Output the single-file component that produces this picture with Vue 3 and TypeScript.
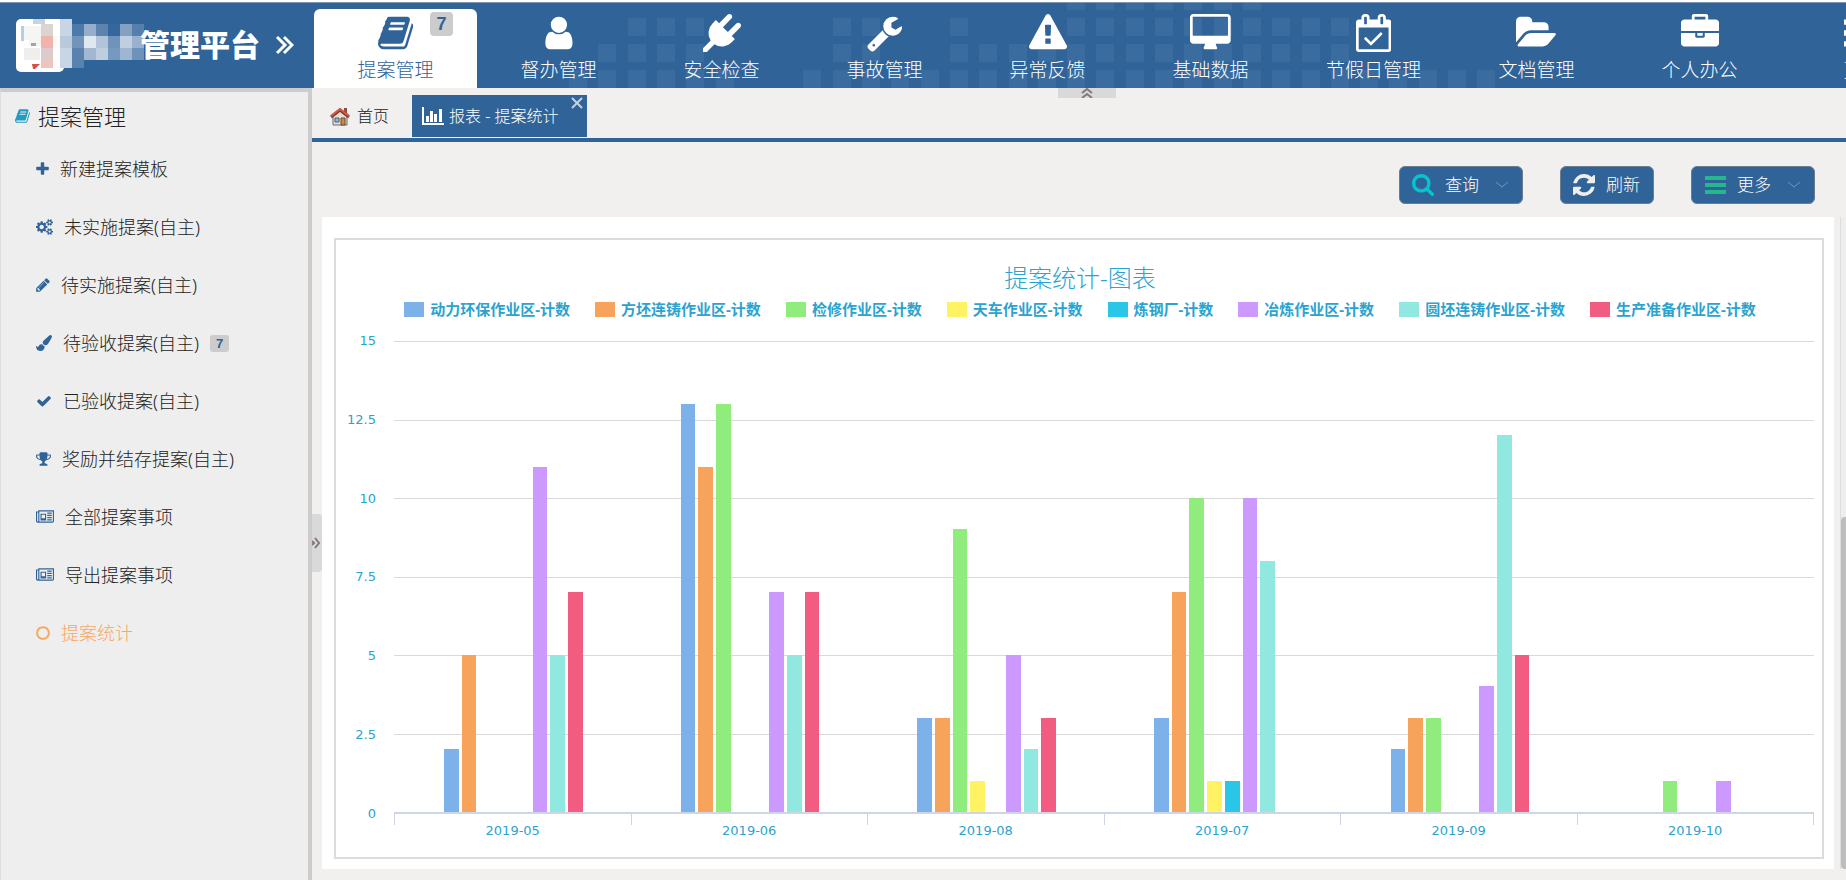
<script setup lang="ts">
interface Glyph { box: string; d: string }
interface NavItem { label: string; icon: string; active?: boolean; badge?: number }
interface MenuItem { label: string; icon: string; width: number; active?: boolean; badge?: number }
interface Series { name: string; color: string; values: number[] }

const glyphs: Record<string, Glyph> = {
  book: { box: '64 0 1664 1792', d: 'M1703 478q40 57 18 129l-275 906q-19 64-76.5 107.5t-122.5 43.5h-923q-77 0-148.5-53.5t-99.5-131.5q-24-67-2-127 0-4 3-27t4-37q1-8-3-21.5t-3-19.5q2-11 8-21t16.5-23.5 16.5-23.5q23-38 45-91.5t30-91.5q3-10 .5-30t-.5-28q3-11 17-28t17-23q21-36 42-92t25-90q1-9-2.5-32t.5-28q4-13 22-30.5t22-22.5q19-26 42.5-84.5t27.5-96.5q1-8-3-25.5t-2-26.5q2-8 9-18t18-23 17-21q8-12 16.5-30.5t15-35 16-36 19.5-32 26.5-23.5 36-11.5 47.5 5.5l-1 3q38-9 51-9h761q74 0 114 56t18 130l-274 906q-36 119-71.5 153.5t-128.5 34.5h-869q-27 0-38 15-11 16-1 43 24 70 144 70h923q29 0 56-15.5t35-41.5l300-987q7-22 5-57 38 15 59 43zm-1064 2q-4 13 2 22.5t20 9.5h608q13 0 25.5-9.5t16.5-22.5l21-64q4-13-2-22.5t-20-9.5h-608q-13 0-25.5 9.5t-16.5 22.5zm-83 256q-4 13 2 22.5t20 9.5h608q13 0 25.5-9.5t16.5-22.5l21-64q4-13-2-22.5t-20-9.5h-608q-13 0-25.5 9.5t-16.5 22.5z' },
  user: { box: '192 0 1408 1792', d: 'M1536 1399q0 109-62.5 187t-150.5 78h-854q-88 0-150.5-78t-62.5-187q0-85 8.5-160.5t31.5-152 58.5-131 94-89 134.5-34.5q131 128 313 128t313-128q76 0 134.5 34.5t94 89 58.5 131 31.5 152 8.5 160.5zm-256-887q0 159-112.5 271.5t-271.5 112.5-271.5-112.5-112.5-271.5 112.5-271.5 271.5-112.5 271.5 112.5 112.5 271.5z' },
  plug: { box: '0 0 1792 1792', d: 'M1755 453q37 38 37 90.5t-37 90.5l-401 400 150 150-160 160q-163 163-389.5 186.5t-411.5-100.5l-362 362h-181v-181l362-362q-124-185-100.5-411.5t186.5-389.5l160-160 150 150 400-401q38-37 91-37t90 37 37 90.5-37 90.5l-400 401 234 234 401-400q38-37 91-37t90 37z' },
  wrench: { box: '64 0 1664 1792', d: 'M448 1472q0-26-19-45t-45-19-45 19-19 45 19 45 45 19 45-19 19-45zm644-420l-682 682q-37 37-90 37-52 0-91-37l-106-108q-38-36-38-90 0-53 38-91l681-681q39 98 114.5 173.5t173.5 114.5zm634-435q0 39-23 106-47 134-164.5 217.5t-258.5 83.5q-185 0-316.5-131.5t-131.5-316.5 131.5-316.5 316.5-131.5q58 0 121.5 16.5t107.5 46.5q16 11 16 28t-16 28l-293 169v224l193 107q5-3 79-48.5t135.5-81 70.5-35.5q15 0 23.5 10t8.5 25z' },
  warning: { box: '0 0 1792 1792', d: 'M1024 1375v-190q0-14-9.5-23.5t-22.5-9.5h-192q-13 0-22.5 9.5t-9.5 23.5v190q0 14 9.5 23.5t22.5 9.5h192q13 0 22.5-9.5t9.5-23.5zm-2-374l18-459q0-12-10-19-13-11-24-11h-220q-11 0-24 11-10 7-10 21l17 457q0 10 10 16.5t24 6.5h185q14 0 23.5-6.5t10.5-16.5zm-14-934l768 1408q35 63-2 126-17 29-46.5 46t-63.5 17h-1536q-34 0-63.5-17t-46.5-46q-37-63-2-126l768-1408q17-31 47-49t65-18 65 18 47 49z' },
  desktop: { box: '0 0 1920 1792', d: 'M1792 992v-832q0-13-9.5-22.5t-22.5-9.5h-1600q-13 0-22.5 9.5t-9.5 22.5v832q0 13 9.5 22.5t22.5 9.5h1600q13 0 22.5-9.5t9.5-22.5zm128-832v1088q0 66-47 113t-113 47h-544q0 37 16 77.5t32 71 16 43.5q0 26-19 45t-45 19h-512q-26 0-45-19t-19-45q0-14 16-44t32-70 16-78h-544q-66 0-113-47t-47-113v-1088q0-66 47-113t113-47h1600q66 0 113 47t47 113z' },
  calendar: { box: '64 0 1664 1792', d: 'M1303 964l-512 512q-10 9-23 9t-23-9l-288-288q-9-10-9-23t9-22l46-46q9-9 22-9t23 9l220 220 444-444q10-9 23-9t22 9l46 46q9 9 9 22t-9 23zm-1111 700h1408v-1024h-1408v1024zm384-1216v-288q0-14-9-23t-23-9h-64q-14 0-23 9t-9 23v288q0 14 9 23t23 9h64q14 0 23-9t9-23zm768 0v-288q0-14-9-23t-23-9h-64q-14 0-23 9t-9 23v288q0 14 9 23t23 9h64q14 0 23-9t9-23zm384-64v1280q0 52-38 90t-90 38h-1408q-52 0-90-38t-38-90v-1280q0-52 38-90t90-38h128v-96q0-66 47-113t113-47h64q66 0 113 47t47 113v96h384v-96q0-66 47-113t113-47h64q66 0 113 47t47 113v96h128q52 0 90 38t38 90z' },
  folder: { box: '0 0 1920 1792', d: 'M1879 952q0 31-31 66l-336 396q-43 51-120.5 86.5t-143.5 35.5h-1088q-34 0-60.5-13t-26.5-43q0-31 31-66l336-396q43-51 120.5-86.5t143.5-35.5h1088q34 0 60.5 13t26.5 43zm-343-344v160h-832q-94 0-197 47.5t-164 119.5l-337 396-5 6q0-4-.5-12.5t-.5-12.5v-960q0-92 66-158t158-66h320q92 0 158 66t66 158v32h544q92 0 158 66t66 158z' },
  briefcase: { box: '0 0 1792 1792', d: 'M640 256h512v-128h-512v128zm1152 640v480q0 66-47 113t-113 47h-1472q-66 0-113-47t-47-113v-480h672v160q0 26 19 45t45 19h320q26 0 45-19t19-45v-160h672zm-768 0v128h-256v-128h256zm768-480v384h-1792v-384q0-66 47-113t113-47h352v-160q0-40 28-68t68-28h576q40 0 68 28t28 68v160h352q66 0 113 47t47 113z' },
  list: { box: '0 0 1792 1792', d: 'M0 256h384v256h-384zM512 256h1280v256h-1280zM0 768h384v256h-384zM512 768h1280v256h-1280zM0 1280h384v256h-384zM512 1280h1280v256h-1280z' },
  plus: { box: '192 0 1408 1792', d: 'M1600 736v192q0 40-28 68t-68 28h-416v416q0 40-28 68t-68 28h-192q-40 0-68-28t-28-68v-416h-416q-40 0-68-28t-28-68v-192q0-40 28-68t68-28h416v-416q0-40 28-68t68-28h192q40 0 68 28t28 68v416h416q40 0 68 28t28 68z' },
  cogs: { box: '-64 0 1920 1792', d: 'M832 896q0-106-75-181t-181-75-181 75-75 181 75 181 181 75 181-75 75-181zm768 512q0-52-38-90t-90-38-90 38-38 90q0 53 37.5 90.5t90.5 37.5 90.5-37.5 37.5-90.5zm0-1024q0-52-38-90t-90-38-90 38-38 90q0 53 37.5 90.5t90.5 37.5 90.5-37.5 37.5-90.5zm-384 421v185q0 10-7 19.5t-16 10.5l-155 24q-11 35-32 76 34 48 90 115 7 11 7 20 0 12-7 19-23 30-82.5 89.5t-78.5 59.5q-11 0-21-7l-115-90q-37 19-77 31-11 108-23 155-7 24-30 24h-186q-11 0-20-7.5t-10-17.5l-23-153q-34-10-75-31l-118 89q-7 7-20 7-11 0-21-8-144-133-144-160 0-9 7-19 10-14 41-53t47-61q-23-44-35-82l-152-24q-10-1-17-9.5t-7-19.5v-185q0-10 7-19.5t16-10.5l155-24q11-35 32-76-34-48-90-115-7-11-7-20 0-12 7-20 22-30 82-89t79-59q11 0 21 7l115 90q34-18 77-32 11-108 23-154 7-24 30-24h186q11 0 20 7.5t10 17.5l23 153q34 10 75 31l118-89q8-7 20-7 11 0 21 8 144 133 144 160 0 8-7 19-12 16-42 54t-45 60q23 48 34 82l152 23q10 2 17 10.5t7 19.5zm640 533v140q0 16-149 31-12 27-30 52 51 113 51 138 0 4-4 7-122 71-124 71-8 0-46-47t-52-68q-20 2-30 2t-30-2q-14 21-52 68t-46 47q-2 0-124-71-4-3-4-7 0-25 51-138-18-25-30-52-149-15-149-31v-140q0-16 149-31 13-29 30-52-51-113-51-138 0-4 4-7 4-2 35-20t59-34 30-16q8 0 46 46.5t52 67.5q20-2 30-2t30 2q51-71 92-112l6-2q4 0 124 70 4 3 4 7 0 25-51 138 17 23 30 52 149 15 149 31zm0-1024v140q0 16-149 31-12 27-30 52 51 113 51 138 0 4-4 7-122 71-124 71-8 0-46-47t-52-68q-20 2-30 2t-30-2q-14 21-52 68t-46 47q-2 0-124-71-4-3-4-7 0-25 51-138-18-25-30-52-149-15-149-31v-140q0-16 149-31 13-29 30-52-51-113-51-138 0-4 4-7 4-2 35-20t59-34 30-16q8 0 46 46.5t52 67.5q20-2 30-2t30 2q51-71 92-112l6-2q4 0 124 70 4 3 4 7 0 25-51 138 17 23 30 52 149 15 149 31z' },
  pencil: { box: '128 0 1536 1792', d: 'M491 1536l91-91-235-235-91 91v107h128v128h107zm523-928q0-22-22-22-10 0-17 7l-542 542q-7 7-7 17 0 22 22 22 10 0 17-7l542-542q7-7 7-17zm-54-192l416 416-832 832h-416v-416zm683 96q0 53-37 90l-166 166-416-416 166-165q36-38 90-38 53 0 91 38l235 234q37 39 37 91z' },
  brush: { box: '0 0 1792 1792', d: 'M1615 0q70 0 122.5 46.5t52.5 116.5q0 63-45 151-332 629-465 752-97 91-218 91-126 0-216.5-92.5t-90.5-219.5q0-128 92-212l638-579q59-54 130-54zm-909 1034q39 76 106.5 130t150.5 76l1 71q4 213-129.5 347t-348.5 134q-123 0-218-46.5t-152.5-127.5-86.5-183-29-220q7 5 41 30t62 44.5 59 36.5 46 17q41 0 55-37 25-66 57.5-112.5t69.5-76 88-47.5 103-25.5 125-10.5z' },
  check: { box: '0 0 1792 1792', d: 'M1671 566q0 40-28 68l-724 724-136 136q-28 28-68 28t-68-28l-136-136-362-362q-28-28-28-68t28-68l136-136q28-28 68-28t68 28l294 295 656-657q28-28 68-28t68 28l136 136q28 28 28 68z' },
  trophy: { box: '64 0 1664 1792', d: 'M522 883q-74-162-74-371h-256v96q0 78 94.5 162t235.5 113zm1078-275v-96h-256q0 209-74 371 141-29 235.5-113t94.5-162zm128-128v128q0 71-41.5 143t-112 130-173 97.5-215.5 44.5q-42 54-95 95-38 34-52.5 72.5t-14.5 89.5q0 54 30.5 91t97.5 37q75 0 133.5 45.5t58.5 114.5v64q0 14-9 23t-23 9h-832q-14 0-23-9t-9-23v-64q0-69 58.5-114.5t133.5-45.5q67 0 97.5-37t30.5-91q0-51-14.5-89.5t-52.5-72.5q-53-41-95-95-113-5-215.5-44.5t-173-97.5-112-130-41.5-143v-128q0-40 28-68t68-28h288v-96q0-66 47-113t113-47h576q66 0 113 47t47 113v96h288q40 0 68 28t28 68z' },
  news: { box: '0 0 2048 1792', d: 'M1024 640h-384v384h384zM1152 1152v128h-640v-128zM1152 512v640h-640v-640zM1792 1152v128h-512v-128zM1792 896v128h-512v-128zM1792 640v128h-512v-128zM1792 384v128h-512v-128zM256 1344v-960h-128v960q0 26 19 45t45 19 45-19 19-45zM1920 1344v-1088h-1536v1088q0 33-11 64h1483q26 0 45-19t19-45zM2048 128v1216q0 80-56 136t-136 56h-1664q-80 0-136-56t-56-136v-1088h256v-128z' },
  circle: { box: '128 0 1536 1792', d: 'M896 352q-148 0-273 73t-198 198-73 273 73 273 198 198 273 73 273-73 198-198 73-273-73-273-198-198-273-73zm768 544q0 209-103 385.5t-279.500 279.500-385.500 103-385.500-103-279.500-279.500-103-385.500 103-385.500 279.500-279.500 385.500-103 385.500 103 279.500 279.500 103 385.500z' },
  refresh: { box: '128 128 1536 1536', d: 'M1639 1056q0 5-1 7-64 268-268 434.500t-478 166.500q-146 0-282.500-55t-243.500-157l-129 129q-19 19-45 19t-45-19-19-45v-448q0-26 19-45t45-19h448q26 0 45 19t19 45-19 45l-137 137q71 66 161 102t187 36q134 0 250-65t186-179q11-17 53-117 8-23 30-23h192q13 0 22.500 9.500t9.500 22.500zm25-800v448q0 26-19 45t-45 19h-448q-26 0-45-19t-19-45 19-45l138-138q-148-137-349-137-134 0-250 65t-186 179q-11 17-53 117-8 23-30 23h-199q-13 0-22.500-9.500t-9.500-22.500v-7q65-268 270-434.500t480-166.500q146 0 284 55.500t245 156.500l130-129q19-19 45-19t45 19 19 45z' },
  search: { box: '64 128 1664 1664', d: 'M1216 832q0-185-131.500-316.500t-316.500-131.500-316.500 131.500-131.500 316.500 131.500 316.500 316.500 131.500 316.500-131.500 131.500-316.500zm512 832q0 52-38 90t-90 38q-54 0-90-38l-343-342q-179 124-399 124-143 0-273.500-55.500t-225-150-150-225-55.500-273.500 55.500-273.500 150-225 225-150 273.500-55.500 273.500 55.500 225 150 150 225 55.500 273.500q0 220-124 399l343 343q37 37 37 90z' },
  bars: { box: '0 0 22 22', d: 'M1 2h21v4H1zM1 9h21v4H1zM1 16h21v4H1z' },
}

const nav: NavItem[] = [
  { label: '提案管理', icon: 'book', active: true, badge: 7 },
  { label: '督办管理', icon: 'user' },
  { label: '安全检查', icon: 'plug' },
  { label: '事故管理', icon: 'wrench' },
  { label: '异常反馈', icon: 'warning' },
  { label: '基础数据', icon: 'desktop' },
  { label: '节假日管理', icon: 'calendar' },
  { label: '文档管理', icon: 'folder' },
  { label: '个人办公', icon: 'briefcase' },
  { label: '更多', icon: 'list' },
]

const menu: MenuItem[] = [
  { label: '新建提案模板', icon: 'plus', width: 13 },
  { label: '未实施提案(自主)', icon: 'cogs', width: 17 },
  { label: '待实施提案(自主)', icon: 'pencil', width: 14 },
  { label: '待验收提案(自主)', icon: 'brush', width: 16, badge: 7 },
  { label: '已验收提案(自主)', icon: 'check', width: 16 },
  { label: '奖励并结存提案(自主)', icon: 'trophy', width: 15 },
  { label: '全部提案事项', icon: 'news', width: 18 },
  { label: '导出提案事项', icon: 'news', width: 18 },
  { label: '提案统计', icon: 'circle', width: 14, active: true },
]

const months = ['2019-05', '2019-06', '2019-08', '2019-07', '2019-09', '2019-10']
const series: Series[] = [
  { name: '动力环保作业区-计数', color: '#7cb1ea', values: [2, 13, 3, 3, 2, 0] },
  { name: '方坯连铸作业区-计数', color: '#f7a35c', values: [5, 11, 3, 7, 3, 0] },
  { name: '检修作业区-计数', color: '#90ed7d', values: [0, 13, 9, 10, 3, 1] },
  { name: '天车作业区-计数', color: '#fff263', values: [0, 0, 1, 1, 0, 0] },
  { name: '炼钢厂-计数', color: '#29c6e8', values: [0, 0, 0, 1, 0, 0] },
  { name: '冶炼作业区-计数', color: '#cc99ff', values: [11, 7, 5, 10, 4, 1] },
  { name: '圆坯连铸作业区-计数', color: '#91e8e1', values: [5, 5, 2, 8, 12, 0] },
  { name: '生产准备作业区-计数', color: '#f15c80', values: [7, 7, 3, 0, 5, 0] },
]
const scale = ['15', '12.5', '10', '7.5', '5', '2.5', '0']
const maxValue = 15

function span(from: number, to: number): number[] {
  return Array.from({ length: to - from + 1 }, (_, i) => from + i)
}
const tileRows = [
  { y: -11, cols: span(17, 23) },
  { y: 15, cols: [2, 3, 4, 9, 10, 13, ...span(17, 26)] },
  { y: 41, cols: [1, 2, 3, 4, 9, 10, ...span(13, 26)] },
  { y: 67, cols: [...span(0, 5), ...span(8, 31)] },
]

const mosaic = [
  [0, 7, 3, 15, '#b9cde0'], [12, 0, 12, 5, '#c9d3dd'], [3, 7, 17, 14, '#f5f5f3'], [20, 5, 12, 12, '#dbd5d2'], [32, 5, 12, 12, '#ffffff'],
  [8, 21, 12, 6, '#f4f4f2'], [10, 24, 5, 3, '#a7a29c'], [20, 17, 12, 12, '#efb5ad'], [32, 17, 12, 12, '#fffafa'],
  [3, 29, 16, 12, '#efeeed'], [20, 29, 12, 12, '#dccbca'], [20, 41, 12, 8, '#edc4be'], [32, 29, 12, 20, '#fdfdfd'],
  [39, 0, 12, 49, '#c8d5e5'], [51, 5, 12, 12, '#4e7aa9'], [39, 17, 12, 12, '#b9c9dc'], [51, 17, 12, 12, '#7394b9'], [51, 29, 12, 20, '#5a82ae'],
  [63, 5, 12, 12, '#34679c'], [63, 17, 12, 24, '#34679c'],
  [75, 5, 12, 12, '#94aecb'], [87, 5, 12, 12, '#5c84af'], [99, 5, 12, 12, '#34679c'], [111, 5, 12, 12, '#85a1c2'], [123, 5, 12, 12, '#577fac'], [135, 5, 8, 12, '#8ca8c8'],
  [75, 17, 12, 12, '#dfe7ef'], [87, 17, 12, 12, '#b2c4d9'], [99, 17, 12, 12, '#6f93ba'], [111, 17, 12, 12, '#c0cfe0'], [123, 17, 12, 12, '#98b1ce'], [135, 17, 12, 12, '#d8e1ec'],
  [75, 29, 12, 12, '#a2b8d1'], [87, 29, 12, 12, '#bfcede'], [99, 29, 12, 12, '#769abf'], [111, 29, 12, 12, '#9fb6d0'], [123, 29, 12, 12, '#6e93bb'],
].map(([x, ...rest]) => [(x as number) >= 75 ? (x as number) - 12 : x, ...rest])
  .filter((m, i) => i < 18 || i > 19) as [number, number, number, number, string][]
</script>

<template>
  <div class="app">
    <header class="top">
      <svg class="tiles" width="1000" height="85" aria-hidden="true">
        <template v-for="row in tileRows" :key="row.y">
          <rect v-for="c in row.cols" :key="c" :x="Math.round(c * 29.3)" :y="row.y" width="18" height="18" />
        </template>
      </svg>
      <div class="brand">
        <svg class="logo" width="128" height="53" viewBox="0 0 128 53" aria-hidden="true">
          <rect width="48" height="53" rx="5" fill="#fff" />
          <g transform="translate(5 0)">
            <rect v-for="(m, i) in mosaic" :key="i" :x="m[0]" :y="m[1]" :width="m[2]" :height="m[3]" :fill="m[4]" />
            <path d="M11 45h8l-5 5h-2z" fill="#d8503f" />
          </g>
        </svg>
        <h1>管理平台</h1>
        <button class="expand" aria-label="展开">
          <svg width="18" height="20" viewBox="0 0 18 20"><path d="M1 2l8 8-8 8M8 2l8 8-8 8" fill="none" stroke="currentColor" stroke-width="3" /></svg>
        </button>
      </div>
      <nav class="modules">
        <a v-for="n in nav" :key="n.label" href="#" class="module" :class="{ active: n.active }">
          <svg height="38" :viewBox="glyphs[n.icon].box" fill="currentColor" aria-hidden="true"><path :d="glyphs[n.icon].d" /></svg>
          <span>{{ n.label }}</span>
          <b v-if="n.badge" class="badge">{{ n.badge }}</b>
        </a>
      </nav>
    </header>

    <div class="body">
      <aside class="side">
        <h2>
          <svg width="15" height="16" :viewBox="glyphs.book.box" fill="#209cc0" aria-hidden="true"><path :d="glyphs.book.d" /></svg>
          提案管理
        </h2>
        <a v-for="m in menu" :key="m.label" href="#" class="entry" :class="{ active: m.active }">
          <svg :width="m.width" height="16" :viewBox="glyphs[m.icon].box" fill="currentColor" aria-hidden="true"><path :d="glyphs[m.icon].d" fill-rule="evenodd" /></svg>
          <span>{{ m.label }}</span>
          <b v-if="m.badge" class="count">{{ m.badge }}</b>
        </a>
      </aside>

      <main class="work">
        <button class="fold-top" aria-label="收起顶部">
          <svg width="12" height="10" viewBox="0 0 12 10"><path d="M1 5l5-4 5 4M1 10l5-4 5 4" fill="none" stroke="#85787a" stroke-width="2" /></svg>
        </button>
        <button class="fold-side" aria-label="收起侧栏">
          <svg width="9" height="12" viewBox="0 0 9 12"><path d="M0 4l2 2-2 2M3 1l4 5-4 5" fill="none" stroke="#85787a" stroke-width="2" /></svg>
        </button>
        <div class="tabs">
          <a href="#" class="tab">
            <svg width="20" height="19" viewBox="0 0 20 19" aria-hidden="true">
              <path d="M14 1h3v5h-3z" fill="#8d4b42" />
              <path d="M3 9l7-6 7 6v9H3z" fill="#e9dfc5" stroke="#5f6d80" />
              <path d="M1 10L10 3l9 7" fill="none" stroke="#7d3a3a" stroke-width="3" />
              <path d="M1 9L10 2l9 7" fill="none" stroke="#cf5a4e" stroke-width="2" />
              <path d="M5 11h4v4H5z" fill="#8fb6dc" stroke="#4e5f77" />
              <path d="M11 11h4v7h-4z" fill="#c98a4c" stroke="#6b4a33" />
            </svg>
            首页
          </a>
          <div class="tab current">
            <svg width="22" height="18" viewBox="0 0 22 18" fill="#fff" aria-hidden="true">
              <path d="M0 0h2v16h20v2H0zM4 9h3v6H4zM8 4h3v11H8zM12 7h3v8h-3zM17 2h3v13h-3z" />
            </svg>
            <span>报表 - 提案统计</span>
            <button class="close" aria-label="关闭">
              <svg width="12" height="12" viewBox="0 0 12 12"><path d="M1 1l10 10M11 1L1 11" stroke="#c4d2e2" stroke-width="2" /></svg>
            </button>
          </div>
        </div>

        <div class="tools">
          <button class="tool">
            <svg class="cyan" width="22" height="22" :viewBox="glyphs.search.box" aria-hidden="true"><path :d="glyphs.search.d" /></svg>
            查询
            <svg class="down" width="13" height="8" viewBox="0 0 13 8" aria-hidden="true"><path d="M0 1l6 5 6-5" /></svg>
          </button>
          <button class="tool">
            <svg width="22" height="22" :viewBox="glyphs.refresh.box" aria-hidden="true"><path :d="glyphs.refresh.d" /></svg>
            刷新
          </button>
          <button class="tool">
            <svg class="green" width="22" height="22" :viewBox="glyphs.bars.box" aria-hidden="true"><path :d="glyphs.bars.d" /></svg>
            更多
            <svg class="down" width="13" height="8" viewBox="0 0 13 8" aria-hidden="true"><path d="M0 1l6 5 6-5" /></svg>
          </button>
        </div>

        <div class="stage">
          <section class="panel">
            <div class="card">
              <h3>提案统计-图表</h3>
              <ul class="legend">
                <li v-for="s in series" :key="s.name"><i :style="{ background: s.color }"></i>{{ s.name }}</li>
              </ul>
              <div class="chart">
                <div class="scale"><span v-for="v in scale" :key="v">{{ v }}</span></div>
                <div class="plot">
                  <div class="lines"><i v-for="n in 6" :key="n"></i></div>
                  <div class="groups">
                    <div v-for="(m, g) in months" :key="m" class="group">
                      <i v-for="s in series" :key="s.name" :style="{ height: (s.values[g] / maxValue) * 100 + '%', background: s.color }"></i>
                    </div>
                  </div>
                </div>
                <div class="months"><span v-for="m in months" :key="m">{{ m }}</span></div>
              </div>
            </div>
          </section>
          <div class="track"><div class="thumb"></div></div>
        </div>
      </main>
    </div>
  </div>
</template>

<style>
body { margin: 0; background: #f2efef; }
</style>

<style scoped>
* { box-sizing: border-box; }
.app {
  display: flex; flex-direction: column; height: 100vh; min-height: 700px; overflow: hidden;
  font-family: "Noto Sans", "Noto Sans CJK SC", sans-serif; font-weight: 300; color: #222;
}
svg { display: block; flex: none; }
a { color: inherit; text-decoration: none; }
button { border: 0; padding: 0; background: none; color: inherit; font: inherit; cursor: pointer; }
h1, h2, h3, ul { margin: 0; padding: 0; }

.top {
  position: relative; flex: none; display: flex; height: 88px; overflow: hidden;
  border-top: 2px solid #fff; background: #306398; box-shadow: inset 0 1px #7d97b2; color: #fff;
}
.tiles { position: absolute; left: 569px; top: 1px; fill: #3b6ca0; }
.brand { position: relative; flex: none; display: flex; align-items: center; width: 314px; padding-left: 16px; }
.brand h1 { margin-left: -4px; font-size: 30px; line-height: 40px; font-weight: 900; }
.expand { margin-left: 16px; }
.modules { position: relative; display: flex; flex: 1; min-width: 0; overflow: hidden; padding-top: 7px; }
.module {
  position: relative; flex: none; width: 163px; padding-top: 5px; display: flex; flex-direction: column;
  align-items: center; gap: 6px; border-radius: 6px 6px 0 0;
}
.module span { font-size: 19px; line-height: 24px; }
.module.active { background: #fff; color: #306398; }
.badge {
  position: absolute; right: 24px; top: 3px; width: 23px; border-radius: 4px; background: #ccc;
  color: #306398; font: 700 18px/24px "Liberation Sans", sans-serif; text-align: center;
}

.body { display: flex; flex: 1; min-height: 0; }
.side { flex: none; width: 312px; border-top: 4px solid #ccc; border-right: 4px solid #ccc; border-left: 1px solid #ddd; background: #eee; }
.side h2 { display: flex; align-items: center; gap: 8px; height: 48px; padding-left: 14px; font-size: 22px; line-height: 30px; font-weight: 300; }
.entry { display: flex; align-items: center; gap: 11px; height: 58px; padding-left: 35px; font-size: 18px; line-height: 24px; }
.entry svg { color: #306398; }
.entry.active, .entry.active svg { color: #f6a963; }
.count { width: 19px; border-radius: 3px; background: #ccc; color: #306398; font: 700 13px/17px "Liberation Sans", sans-serif; text-align: center; }

.work { position: relative; flex: 1; min-width: 0; display: flex; flex-direction: column; background: #f2efef; }
.fold-top { position: absolute; left: 746px; top: 0; width: 58px; height: 10px; display: flex; justify-content: center; background: #d9d9d9; }
.fold-side { position: absolute; left: 0; top: 426px; width: 10px; height: 58px; display: flex; align-items: center; border-radius: 0 4px 4px 0; background: #d9d9d9; }
.tabs { flex: none; display: flex; align-items: flex-end; height: 54px; border-bottom: 4px solid #306398; font-size: 16px; line-height: 24px; }
.tab { display: flex; align-items: center; gap: 7px; width: 100px; height: 42px; margin-bottom: 1px; padding-left: 18px; }
.tab.current { position: relative; gap: 5px; width: 175px; padding-left: 10px; background: #306398; color: #fff; white-space: nowrap; }
.close { position: absolute; right: 4px; top: 2px; }

.tools { flex: none; display: flex; justify-content: flex-end; align-items: center; gap: 37px; height: 75px; padding: 10px 31px 0 0; }
.tool {
  display: flex; align-items: center; gap: 11px; height: 38px; padding: 0 13px 0 12px;
  border: 1px solid #6d7d8f; border-radius: 6px; background: #306398; color: #fff; font-size: 17px; line-height: 24px;
}
.tool svg { fill: #eee; }
.tool .cyan { fill: #06c4ce; }
.tool .green { fill: #25b78d; }
.tool .down { margin-left: 6px; fill: none; stroke: #7a96b5; }

.stage { flex: 1; min-height: 0; display: flex; justify-content: space-between; }
.panel { flex: 1; min-width: 0; display: flex; margin: 0 6px 11px 10px; padding: 21px 10px 10px 12px; background: #fff; }
.card { flex: 1; min-width: 0; display: flex; flex-direction: column; padding: 20px 8px 12px 10px; border: 2px solid #dcdcdc; color: #2ba3cf; }
.card h3 { font-size: 24px; line-height: 36px; font-weight: 300; text-align: center; }
.legend { display: flex; justify-content: center; gap: 25px; height: 26px; font-size: 15px; line-height: 26px; font-weight: 700; list-style: none; white-space: nowrap; }
.legend li { display: flex; align-items: center; gap: 6px; }
.legend i { width: 20px; height: 15px; }
.chart {
  flex: 1; min-height: 0; display: grid; grid-template-columns: 30px 1fr; grid-template-rows: 1fr 31px; column-gap: 16px;
  margin-top: 19px; font: 400 13px/20px "DejaVu Sans", sans-serif;
}
.scale { display: flex; flex-direction: column; justify-content: space-between; margin: -10px 0; text-align: right; }
.plot { display: grid; margin-left: 2px; border-bottom: 2px solid #ccd6e6; }
.lines, .groups { grid-area: 1 / 1; display: flex; }
.lines { flex-direction: column; }
.lines i { flex: 1; border-top: 1px solid #dadada; }
.group { flex: 1; display: flex; align-items: flex-end; gap: 3px; padding: 0 48px 0 50px; }
.group i { flex: 1; }
.months { grid-column: 2; display: flex; margin-left: 2px; }
.months span { flex: 1; height: 11px; padding-top: 7px; border-left: 1px solid #ccd6e6; text-align: center; }
.months span:last-child { border-right: 1px solid #ccd6e6; }
.track { flex: none; width: 6px; margin-bottom: 11px; border-left: 1px solid #ddd; background: #eee; display: flex; align-items: flex-end; }
.thumb { width: 100%; height: 54%; border-radius: 4px 0 0 4px; background: #bdbdbd; }
</style>
